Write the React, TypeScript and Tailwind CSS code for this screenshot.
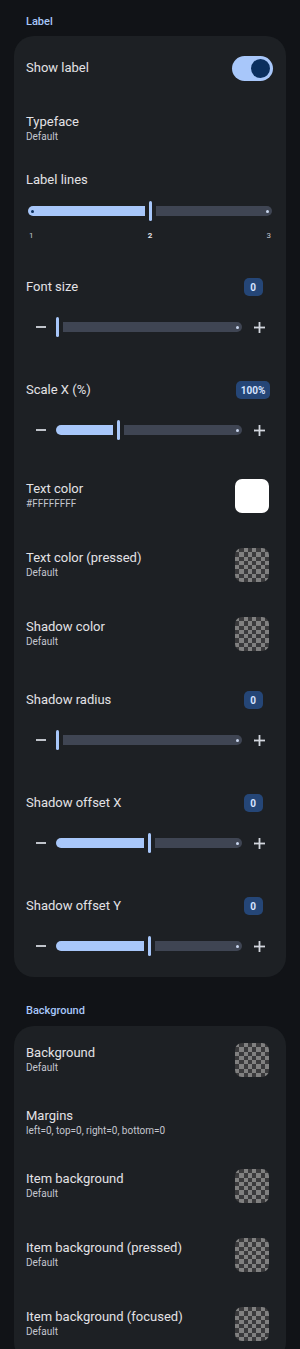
import React from 'react';

const Checker: React.FC = () => {
  const cells = Array.from({ length: 64 }, (_, i) => {
    const r = Math.floor(i / 8);
    const c = i % 8;
    return (r + c) % 2 === 0;
  });
  return (
    <div className="grid h-[34px] w-[34px] grid-cols-8 grid-rows-8 overflow-hidden rounded-[7px]">
      {cells.map((light, i) => (
        <div key={i} className={light ? 'bg-[#808080]' : 'bg-[#3a3a3c]'} />
      ))}
    </div>
  );
};

const Minus: React.FC = () => (
  <svg width="10" height="10" viewBox="0 0 10 10" className="flex-none">
    <line x1="0" y1="5" x2="10" y2="5" stroke="#d3d6de" strokeWidth="1.8" />
  </svg>
);

const Plus: React.FC = () => (
  <svg width="11" height="11" viewBox="0 0 11 11" className="flex-none">
    <line x1="0" y1="5.5" x2="11" y2="5.5" stroke="#d3d6de" strokeWidth="1.8" />
    <line x1="5.5" y1="0" x2="5.5" y2="11" stroke="#d3d6de" strokeWidth="1.8" />
  </svg>
);

// barra del slider, f = posicion del handle (0..1)
const Track: React.FC<{ f: number; startDot?: boolean }> = ({ f, startDot }) => (
  <div className="flex h-5 flex-1 items-center gap-[4px]">
    {f > 0 && (
      <div
        className="relative h-[10px] flex-none rounded-l-full rounded-r-[2px] bg-[#a8c7fa]"
        style={{ width: `calc(${f * 100}% - 5.5px)` }}
      >
        {startDot && <div className="absolute left-[3px] top-[3.5px] h-[3px] w-[3px] rounded-full bg-[#0b2f5e]" />}
      </div>
    )}
    <div className="h-5 w-[3px] flex-none rounded-full bg-[#a8c7fa]" />
    <div className="relative h-[10px] flex-1 rounded-l-[2px] rounded-r-full bg-[#3f4553]">
      <div className="absolute right-[3px] top-[3.5px] h-[3px] w-[3px] rounded-full bg-[#c9d6ee]" />
    </div>
  </div>
);

const StepSlider: React.FC<{ f: number; className?: string }> = ({ f, className }) => (
  <div className={`flex h-5 items-center pl-[10px] pr-[9px] ${className ?? ''}`}>
    <Minus />
    <div className="ml-[10px] mr-[12px] flex flex-1">
      <Track f={f} />
    </div>
    <Plus />
  </div>
);

const Badge: React.FC<{ value: string }> = ({ value }) => (
  <div className="flex w-[42px] justify-center">
    <div className="flex h-[18px] min-w-[19px] items-center justify-center rounded-[5px] bg-[#254677] px-[5px] text-[10px] font-bold text-[#d6e3ff]">
      {value}
    </div>
  </div>
);

const SliderHeader: React.FC<{ title: string; value: string; className?: string }> = ({ title, value, className }) => (
  <div className={`flex h-[18px] items-center justify-between ${className ?? ''}`}>
    <span className="text-[13px] leading-4 text-[#e3e2e6]">{title}</span>
    <Badge value={value} />
  </div>
);

const TitleBlock: React.FC<{ title: string; sub: string }> = ({ title, sub }) => (
  <div className="flex flex-col">
    <span className="text-[13px] leading-4 text-[#e3e2e6]">{title}</span>
    <span className="text-[10px] leading-[14px] text-[#c4c6cf]">{sub}</span>
  </div>
);

const ColorRow: React.FC<{ title: string; sub: string; white?: boolean; className?: string }> = ({ title, sub, white, className }) => (
  <div className={`flex h-[34px] items-center justify-between ${className ?? ''}`}>
    <TitleBlock title={title} sub={sub} />
    <div className="mr-[5px]">
      {white ? <div className="h-[34px] w-[34px] rounded-[7px] bg-white" /> : <Checker />}
    </div>
  </div>
);

const SectionLabel: React.FC<{ text: string; className?: string }> = ({ text, className }) => (
  <div className={`h-[14px] px-[26px] text-[11px] font-medium leading-[14px] text-[#a8c7fa] ${className ?? ''}`}>{text}</div>
);

const App: React.FC = () => {
  return (
    <div
      className="h-[1349px] w-[300px] overflow-hidden bg-[#111317] pt-[15px]"
      style={{ fontFamily: 'Roboto, "Noto Sans", sans-serif' }}
    >
      {/* Seccion Label */}
      <SectionLabel text="Label" className="mb-[7px]" />
      <div className="mx-[14px] flex flex-col rounded-[20px] bg-[#1d2024] px-[12px] pb-[21px] pt-[18px]">
        <div className="flex h-[28px] items-center justify-between">
          <span className="text-[13px] leading-4 text-[#e3e2e6]">Show label</span>
          <div className="mr-[1px] flex h-[25px] w-[41px] items-center justify-end rounded-full bg-[#a8c7fa] pr-[3px]">
            <div className="h-[19px] w-[19px] rounded-full bg-[#0b2f5e]" />
          </div>
        </div>

        <div className="mt-[32px]">
          <TitleBlock title="Typeface" sub="Default" />
        </div>

        <span className="mt-[28px] text-[13px] leading-4 text-[#e3e2e6]">Label lines</span>
        <div className="mt-[13px] flex px-[2px]">
          <Track f={0.5} startDot />
        </div>
        <div className="mt-[10px] flex justify-between px-[3px] text-[8px] leading-[10px] text-[#c4c6cf]">
          <span>1</span>
          <span className="font-bold text-[#e3e2e6]">2</span>
          <span>3</span>
        </div>

        <SliderHeader title="Font size" value="0" className="mt-[37px]" />
        <StepSlider f={0} className="mt-[21px]" />

        <SliderHeader title="Scale X (%)" value="100%" className="mt-[44px]" />
        <StepSlider f={0.335} className="mt-[21px]" />

        <ColorRow title="Text color" sub="#FFFFFFFF" white className="mt-[39px]" />
        <ColorRow title="Text color (pressed)" sub="Default" className="mt-[35px]" />
        <ColorRow title="Shadow color" sub="Default" className="mt-[35px]" />

        <SliderHeader title="Shadow radius" value="0" className="mt-[40px]" />
        <StepSlider f={0} className="mt-[21px]" />

        <SliderHeader title="Shadow offset X" value="0" className="mt-[44px]" />
        <StepSlider f={0.5} className="mt-[21px]" />

        <SliderHeader title="Shadow offset Y" value="0" className="mt-[44px]" />
        <StepSlider f={0.5} className="mt-[21px]" />
      </div>

      {/* Seccion Background */}
      <SectionLabel text="Background" className="mb-[8px] mt-[27px]" />
      <div className="mx-[14px] flex flex-col rounded-[20px] bg-[#1d2024] px-[12px] pb-[21px] pt-[17px]">
        <ColorRow title="Background" sub="Default" />
        <div className="mt-[31px]">
          <TitleBlock title="Margins" sub="left=0, top=0, right=0, bottom=0" />
        </div>
        <ColorRow title="Item background" sub="Default" className="mt-[31px]" />
        <ColorRow title="Item background (pressed)" sub="Default" className="mt-[35px]" />
        <ColorRow title="Item background (focused)" sub="Default" className="mt-[35px]" />
      </div>
    </div>
  );
};

export default App;
